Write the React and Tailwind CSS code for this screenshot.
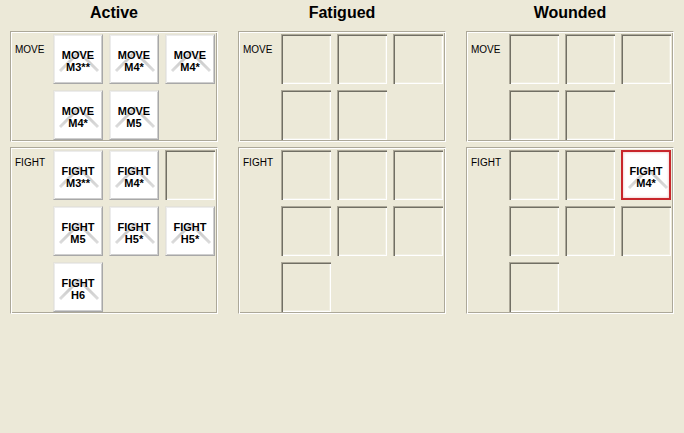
const font = { fontFamily: '"Liberation Sans", Arial, sans-serif' };

const columns = [
  {
    title: 'Active',
    move: [
      { kind: 'card', top: 'MOVE', bottom: 'M3**' },
      { kind: 'card', top: 'MOVE', bottom: 'M4*' },
      { kind: 'card', top: 'MOVE', bottom: 'M4*' },
      { kind: 'card', top: 'MOVE', bottom: 'M4*' },
      { kind: 'card', top: 'MOVE', bottom: 'M5' },
    ],
    fight: [
      { kind: 'card', top: 'FIGHT', bottom: 'M3**' },
      { kind: 'card', top: 'FIGHT', bottom: 'M4*' },
      { kind: 'empty' },
      { kind: 'card', top: 'FIGHT', bottom: 'M5' },
      { kind: 'card', top: 'FIGHT', bottom: 'H5*' },
      { kind: 'card', top: 'FIGHT', bottom: 'H5*' },
      { kind: 'card', top: 'FIGHT', bottom: 'H6' },
    ],
  },
  {
    title: 'Fatigued',
    move: Array.from({ length: 5 }, () => ({ kind: 'empty' })),
    fight: Array.from({ length: 7 }, () => ({ kind: 'empty' })),
  },
  {
    title: 'Wounded',
    move: Array.from({ length: 5 }, () => ({ kind: 'empty' })),
    fight: [
      { kind: 'empty' },
      { kind: 'empty' },
      { kind: 'card', top: 'FIGHT', bottom: 'M4*', selected: true },
      { kind: 'empty' },
      { kind: 'empty' },
      { kind: 'empty' },
      { kind: 'empty' },
    ],
  },
];

const Chevron = () => (
  <svg className="absolute inset-0" width="50" height="50" viewBox="0 0 50 50">
    <defs>
      <linearGradient id="chev" x1="0" y1="0" x2="0" y2="1">
        <stop offset="0" stopColor="#bdbdbd" />
        <stop offset="1" stopColor="#dcdcdc" />
      </linearGradient>
    </defs>
    <polyline
      points="6,36 25,17 44,36"
      fill="none"
      stroke="url(#chev)"
      strokeWidth="3"
      strokeLinejoin="round"
    />
  </svg>
);

const Card = ({ top, bottom, selected }) => (
  <div
    className={`relative w-[50px] h-[50px] bg-white ${
      selected
        ? 'border-2 border-[#c8262b] shadow-[inset_0_0_3px_#e9b4b4]'
        : 'border border-[#e4e2d8] border-r-[#a8a8a8] border-b-[#a8a8a8] shadow-[inset_1px_1px_0_#ececec,inset_-1px_-1px_0_#cfcfcf]'
    }`}
  >
    <Chevron />
    <div
      className={`relative flex flex-col items-center text-[11px] font-bold leading-[12px] text-black [text-shadow:0_0_2px_#fff,0_0_1px_#fff] ${
        selected ? 'pt-[13px]' : 'pt-[14px]'
      }`}
      style={font}
    >
      <span>{top}</span>
      <span>{bottom}</span>
    </div>
  </div>
);

const EmptySlot = () => (
  <div className="w-[50px] h-[50px] shadow-[inset_1px_1px_0_#aca899,inset_2px_2px_0_#716f64,inset_-1px_-1px_0_#ffffff,inset_-2px_-2px_0_#f1efe2]" />
);

const Panel = ({ label, slots, labelOffset }) => (
  <div className="flex border border-[#aca899] border-r-white border-b-white shadow-[inset_1px_1px_0_#ffffff,inset_-1px_-1px_0_#aca899] pt-[2px] pr-[1px] pb-[1px]">
    <div className={`w-[42px] pl-[4px] text-[10px] leading-[12px] text-black ${labelOffset}`} style={font}>
      {label}
    </div>
    <div className="grid grid-cols-[50px_50px_50px] auto-rows-[50px] gap-[6px]">
      {slots.map((s, i) =>
        s.kind === 'card' ? <Card key={i} {...s} /> : <EmptySlot key={i} />
      )}
    </div>
  </div>
);

export default function App() {
  return (
    <div className="w-[684px] h-[433px] bg-[#ece9d8] overflow-hidden">
      <div className="flex gap-[20px] pl-[10px]">
        {columns.map((col) => (
          <div key={col.title} className="w-[208px] flex flex-col">
            <div
              className="h-[31px] pt-[3px] text-center text-[16px] font-bold leading-[20px] text-black"
              style={font}
            >
              {col.title}
            </div>
            <Panel label="MOVE" slots={col.move} labelOffset="mt-[10px]" />
            <div className="h-[5px]" />
            <Panel label="FIGHT" slots={col.fight} labelOffset="mt-[7px]" />
          </div>
        ))}
      </div>
    </div>
  );
}
